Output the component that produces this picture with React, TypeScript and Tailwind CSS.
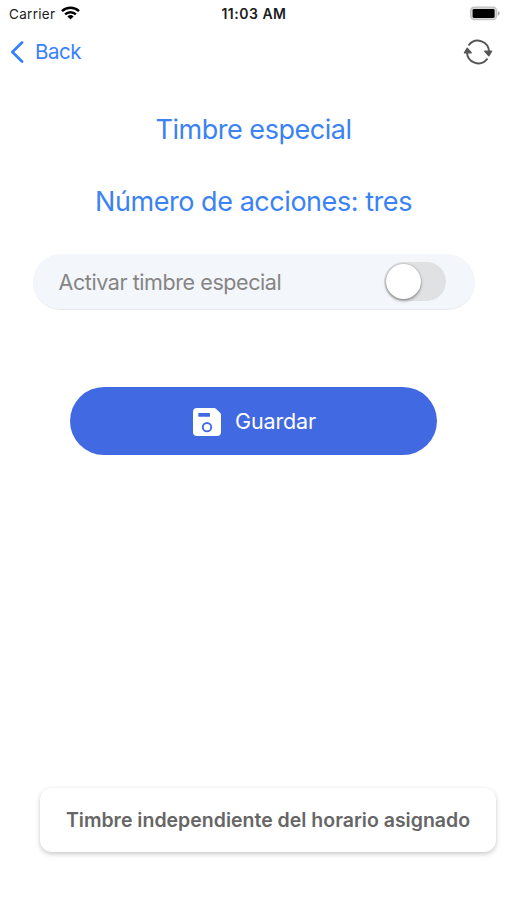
import React from "react";

function StatusBar() {
  return (
    <div className="grid h-7 grid-cols-3 items-center pl-[9px] pr-[7px] text-[13.5px] text-[#1c1c1c]">
      <div className="flex items-center gap-[6px]">
        <span className="tracking-[0.3px]">Carrier</span>
        <svg className="-mt-[2px]" width="19" height="14" viewBox="0 0 19 14" fill="none" stroke="#000" strokeWidth="2.5">
          <path d="M1 5.1a12.3 12.3 0 0 1 17 0" />
          <path d="M4.1 8.4a7.8 7.8 0 0 1 10.8 0" />
          <path d="M9.5 13.6 6.4 10.5a4.5 4.5 0 0 1 6.2 0Z" fill="#000" stroke="none" />
        </svg>
      </div>
      <span className="-mt-px whitespace-nowrap pr-[1px] text-center text-[14px] font-semibold tracking-[0.5px]">11:03 AM</span>
      <svg className="-mt-[2px] justify-self-end" width="31" height="15" viewBox="0 0 31 15">
        <rect x="1.6" y="1.1" width="26" height="12.6" rx="3.6" fill="#d6d6d6" stroke="#c2c2c2" strokeWidth="1.2" />
        <rect x="3.6" y="3" width="22" height="8.9" rx="1.4" fill="#000" />
        <path d="M28.8 5v4.8q1.9-.9 1.9-2.4T28.8 5Z" fill="#aaa" />
      </svg>
    </div>
  );
}

function SyncIcon() {
  return (
    <svg width="30" height="26" viewBox="0 0 30 26" fill="none" stroke="#555" strokeWidth="1.9" strokeLinecap="round" strokeLinejoin="round">
      <path d="M6 5.8A11.3 11.3 0 0 1 26 13" />
      <path d="M24 20.2A11.3 11.3 0 0 1 4 13" />
      <path d="M21.8 12.2h6.8l-2.8 4.6Z" fill="#555" strokeWidth="1.3" />
      <path d="M8.2 13.8H1.4l2.8-4.6Z" fill="#555" strokeWidth="1.3" />
    </svg>
  );
}

function SaveIcon() {
  return (
    <svg className="mt-[2px]" width="28" height="28" viewBox="0 0 28 28">
      <path d="M4 0h17.2q1 0 1.7.7l4.4 4.4q.7.7.7 1.7V24a4 4 0 0 1-4 4H4a4 4 0 0 1-4-4V4a4 4 0 0 1 4-4Z" fill="#fff" />
      <rect x="5.3" y="5.1" width="11.7" height="3.6" rx="0.4" fill="#4169e1" />
      <circle cx="14" cy="19.2" r="4.2" fill="none" stroke="#4169e1" strokeWidth="1.9" />
    </svg>
  );
}

export default function App() {
  return (
    <div className="flex h-[900px] w-[507px] flex-col overflow-hidden bg-white font-['Inter','Liberation_Sans',sans-serif]">
      <StatusBar />
      <header className="flex h-12 items-center justify-between pl-[10px] pr-[14px] text-[#3880ff]">
        <button className="flex items-center gap-[11px]">
          <svg width="14" height="22" viewBox="0 0 14 22" fill="none" stroke="currentColor" strokeWidth="2.8" strokeLinecap="round" strokeLinejoin="round">
            <path d="M12 1.6 2.4 11 12 20.4" />
          </svg>
          <span className="text-[20.5px] tracking-[-0.45px]">Back</span>
        </button>
        <SyncIcon />
      </header>
      <main className="flex flex-col items-center">
        <h1 className="mt-[34px] h-10 whitespace-nowrap text-[27px] leading-10 tracking-[-0.48px] text-[#3b82f3]">Timbre especial</h1>
        <h2 className="mt-8 h-10 whitespace-nowrap text-[27px] leading-10 tracking-[-0.45px] text-[#3b82f3]">Número de acciones: tres</h2>
        <div className="mt-[32px] flex h-[56px] w-[442px] items-center justify-between rounded-full border-b border-[#e6e9ec] bg-[#f3f6fa] pl-[26px] pr-[29px]">
          <span className="mt-px whitespace-nowrap text-[21.5px] tracking-[-0.42px] text-[#858585]">Activar timbre especial</span>
          <span role="switch" aria-checked="false" className="flex h-[39px] w-[62px] items-center rounded-full bg-[#dfe1e2] pl-[2px]">
            <span className="size-[35px] rounded-full bg-white shadow-[0_2px_3px_rgba(0,0,0,0.3),0_0_2px_rgba(0,0,0,0.3)]" />
          </span>
        </div>
        <button className="mt-[77px] flex h-[68px] w-[367px] items-center justify-center gap-[14px] rounded-full bg-[#4169e1] pl-[2px] text-white">
          <SaveIcon />
          <span className="text-[21.5px] tracking-[-0.15px]">Guardar</span>
        </button>
      </main>
      <div className="mb-[48px] ml-10 mt-auto flex h-[64px] w-[456px] items-center justify-center rounded-[12px] bg-white shadow-[0_2px_5px_rgba(0,0,0,0.22)]">
        <p className="mt-[2px] whitespace-nowrap text-[19.5px] font-semibold text-[#666]">Timbre independiente del horario asignado</p>
      </div>
    </div>
  );
}
